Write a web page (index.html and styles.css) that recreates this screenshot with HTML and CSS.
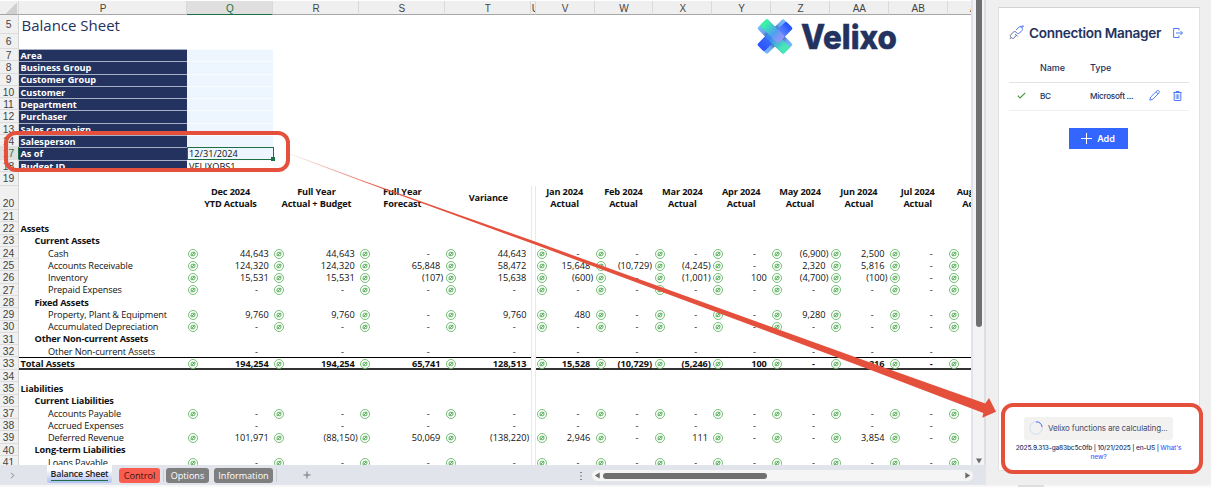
FILE: index.html
```html
<!DOCTYPE html>
<html lang="en">
<head>
    <meta charset="utf-8">
    <title>Balance Sheet</title>
    <link rel="stylesheet" href="styles.css">
</head>
<body>
    <svg class="defs" width="0" height="0">
        <symbol id="velixoCell" viewBox="0 0 10 10">
            <circle cx="5" cy="5" r="4.5" fill="#fff" stroke="#55b055" stroke-width="0.8" />
            <path d="M3.1 6.6 V4.8 Q3.1 3.3 4.6 3.3 H6.9 V5.2 Q6.9 6.7 5.4 6.7 H3.1" fill="none" stroke="#279a2b" stroke-width="0.8" />
            <path d="M4.3 5.7 L5.7 4.3" stroke="#178a1c" stroke-width="1" />
        </symbol>
    </svg>

    <div class="app">
        <div class="workbook">
            <div class="sheetArea">
                <div class="sheet" id="sheet"></div>
                <div class="vScroll"><div class="vThumb"></div><svg class="vArrow" viewBox="0 0 8 8"><path d="M1 1.5 H7 L4 6.5 Z" fill="#6b6b6b" /></svg></div>
                <svg class="logo" viewBox="0 0 142 38">
                    <defs>
                        <linearGradient id="topLeft"><stop offset="0.1" stop-color="#35f5a2" /><stop offset="0.6" stop-color="#4fa0f0" /><stop offset="1" stop-color="#9a92fa" /></linearGradient>
                        <linearGradient id="topRight" x1="0" y1="0" x2="0" y2="1"><stop offset="0" stop-color="#1f50ff" /><stop offset="0.5" stop-color="#5a80fb" /><stop offset="1" stop-color="#9a92fa" /></linearGradient>
                        <linearGradient id="bottomLeft" x1="0" y1="0" x2="0" y2="1"><stop offset="0" stop-color="#3b86ee" /><stop offset="1" stop-color="#2e50ff" /></linearGradient>
                        <linearGradient id="bottomRight"><stop offset="0.2" stop-color="#3b86ee" /><stop offset="0.8" stop-color="#48e8b6" /></linearGradient>
                        <linearGradient id="foldH"><stop offset="0" stop-color="#7abaff" /><stop offset="0.2" stop-color="#6aa8f0" /><stop offset="0.35" stop-color="#3c68b4" /><stop offset="0.65" stop-color="#3c68b4" /><stop offset="0.8" stop-color="#6aa8f0" /><stop offset="1" stop-color="#7abaff" /></linearGradient>
                        <linearGradient id="foldV" x1="0" y1="0" x2="0" y2="1"><stop offset="0" stop-color="#7abaff" /><stop offset="0.2" stop-color="#6aa8f0" /><stop offset="0.35" stop-color="#3c68b4" /><stop offset="0.65" stop-color="#3c68b4" /><stop offset="0.8" stop-color="#6aa8f0" /><stop offset="1" stop-color="#7abaff" /></linearGradient>
                    </defs>
                    <g transform="translate(19 18.5) rotate(45)">
                        <rect x="-18.5" y="-7" width="37" height="14" rx="2" fill="url(#foldH)" />
                        <rect x="-7" y="-18.5" width="14" height="37" rx="2" fill="url(#foldV)" />
                        <rect x="-7" y="-3" width="10" height="21.5" rx="2" fill="url(#bottomLeft)" />
                        <rect x="-7" y="-3" width="25.5" height="10" rx="2" fill="url(#bottomRight)" />
                        <rect x="-3" y="-18.5" width="10" height="21.5" rx="2" fill="url(#topRight)" />
                        <rect x="-18.5" y="-7" width="25.5" height="10" rx="2" fill="url(#topLeft)" />
                    </g>
                    <text x="45" y="31.2" class="logoText" textLength="96" lengthAdjust="spacingAndGlyphs">Velixo</text>
                </svg>
            </div>
            <div class="tabBar">
                <svg class="tabNav" viewBox="0 0 8 8"><path d="M2.5 1 L5.5 4 L2.5 7" fill="none" stroke="#777" /></svg>
                <div class="tab active"><span>Balance Sheet</span></div>
                <div class="tab red">Control</div>
                <div class="tabSep"></div>
                <div class="tab gray options">Options</div>
                <div class="tab gray info">Information</div>
                <div class="tabSep"></div>
                <svg class="addTab" viewBox="0 0 8 8"><path d="M4 0.5 V7.5 M0.5 4 H7.5" stroke="#666" stroke-width="0.9" /></svg>
                <svg class="dots" viewBox="0 0 4 10"><path d="M1.4 1.5 h1.2 M1.4 5 h1.2 M1.4 8.5 h1.2" stroke="#444" stroke-width="1.2" /></svg>
                <div class="hScroll">
                    <svg viewBox="0 0 8 8"><path d="M6.5 0.5 V7.5 L1 4 Z" fill="#6b6b6b" /></svg>
                    <div class="hThumb"></div>
                    <svg class="hRight" viewBox="0 0 8 8"><path d="M1.5 0.5 V7.5 L7 4 Z" fill="#6b6b6b" /></svg>
                </div>
            </div>
        </div>

        <div class="pane">
            <div class="card">
                <div class="cardTitle">
                    <svg class="linkIcon" viewBox="0 0 16 16" fill="none">
                        <path d="M6.6 9.6 L9.2 12.2 M8.2 10.6 L5.6 13.6 C4.8 14.5 3.6 14.6 2.8 13.8 L2 13 C1.2 12.2 1.2 11 2 10.2 L4.8 7.6 C5.6 6.8 6.8 6.8 7.6 7.6 L8.2 8.2" stroke="#5a6488" />
                        <path d="M7.6 5.4 L10.4 2.4 C11.2 1.6 12.4 1.6 13.2 2.4 L13.8 3 C14.6 3.8 14.6 5 13.8 5.8 L11.2 8.6 C10.4 9.4 9.2 9.4 8.4 8.6 L7.6 7.8" stroke="#3d6df5" />
                        <path d="M12 1.8 L15.4 0.8 M13.8 3 L15.6 1" stroke="#3d6df5" />
                        <path d="M0.8 15 L2.4 13.4" stroke="#5a6488" />
                    </svg>
                    <h1>Connection Manager</h1>
                    <svg class="exitIcon" viewBox="0 0 10 10" fill="none" stroke="#3d6df5" stroke-width="0.9"><path d="M6 2.5 V0.5 H0.6 V9.5 H6 V7.5 M3 5 H9.3 M7.5 3 L9.5 5 L7.5 7" /></svg>
                </div>
                <div class="connRow head">
                    <span></span><span>Name</span><span>Type</span><span></span><span></span>
                </div>
                <div class="connRow">
                    <svg class="check" viewBox="0 0 9 7"><path d="M0.8 3.6 L3.1 6 L8.3 0.8" fill="none" stroke="#3f9a3c" stroke-width="1.1" /></svg>
                    <span>BC</span>
                    <span>Microsoft ...</span>
                    <svg class="pencil" viewBox="0 0 11 11" fill="none" stroke="#3d6df5" stroke-width="0.9"><path d="M0.8 10.2 L1.7 7 L7.9 0.9 C8.5 0.3 9.3 0.3 9.8 0.9 C10.5 1.5 10.5 2.4 9.9 3 L3.9 9.2 Z M7 1.9 L9 3.9" /></svg>
                    <svg class="trash" viewBox="0 0 9 10" fill="none" stroke="#3d6df5" stroke-width="0.9"><path d="M0.3 1.5 H8.7 M3 1.4 V0.5 H6 V1.4 M1.2 1.6 V9.5 H7.8 V1.6" /><path d="M3.2 3.2 V8 M4.5 3.2 V8 M5.8 3.2 V8" stroke-width="0.7" /></svg>
                </div>
                <button class="addButton"><svg viewBox="0 0 11 11"><path d="M5.5 0 V11 M0 5.5 H11" stroke="#fff" stroke-width="1" /></svg>Add</button>
                <div class="status">
                    <div class="calculating">
                        <svg viewBox="0 0 14 14" fill="none"><circle cx="7" cy="7" r="6.2" stroke="#cfdafb" /><path d="M7 0.8 A6.2 6.2 0 0 1 13.1 6" stroke="#4a74f5" /></svg>
                        <span>Velixo functions are calculating...</span>
                    </div>
                    <p class="version">2025.9.313-ga83bc5c0fb | 10/21/2025 | en-US | <a>What's<br>new?</a></p>
                </div>
            </div>
        </div>
        <div class="bottomEdge"><div class="edgeMark"></div></div>
    </div>

    <div class="callout cellCallout"></div>
    <div class="callout statusCallout"></div>
    <svg class="arrow" viewBox="0 0 1211 487">
        <defs>
            <linearGradient id="fade" gradientUnits="userSpaceOnUse" x1="288" y1="0" x2="385" y2="0"><stop offset="0" stop-color="#e5503c" stop-opacity="0.1" /><stop offset="1" stop-color="#e5503c" /></linearGradient>
        </defs>
        <path d="M290 153.6 L360 179.5 L420 201 L535 241.6 L780 329.9 L891 370 L985.3 403.6 L989 398 L996 411.7 L982.3 417.8 L983.3 412.9 L872 370.4 L780 336 L535 244.6 L420 202.5 L360 180.5 L290 154.3 Z" fill="url(#fade)" />
    </svg>

    <script>
        var columns = ['P', 'Q', 'R', 'S', 'T', 'U', 'V', 'W', 'X', 'Y', 'Z', 'AA', 'AB', 'AC'];
        var dashes = '- - - - - - - - - - -';

        // [row number, kind, label, values for Q-T and V-AB]
        var rows = [
            [5, 'title', 'Balance Sheet'],
            [6, 'blank tall'],
            [7, 'filter', 'Area'],
            [8, 'filter', 'Business Group'],
            [9, 'filter', 'Customer Group'],
            [10, 'filter', 'Customer'],
            [11, 'filter', 'Department'],
            [12, 'filter', 'Purchaser'],
            [13, 'filter', 'Sales campaign'],
            [14, 'filter', 'Salesperson'],
            [17, 'filter selected', 'As of', '12/31/2024'],
            [18, 'filter plain', 'Budget ID', 'VELIXOBS1'],
            [19, 'blank gap'],
            [20, 'header'],
            [21, 'blank'],
            [22, 'group', 'Assets'],
            [23, 'group sub', 'Current Assets'],
            [24, 'item', 'Cash', '44,643 44,643 - 44,643 - - - - (6,900) 2,500 -'],
            [25, 'item', 'Accounts Receivable', '124,320 124,320 65,848 58,472 15,648 (10,729) (4,245) - 2,320 5,816 -'],
            [26, 'item', 'Inventory', '15,531 15,531 (107) 15,638 (600) - (1,001) 100 (4,700) (100) -'],
            [27, 'item', 'Prepaid Expenses', dashes],
            [28, 'group sub', 'Fixed Assets'],
            [29, 'item', 'Property, Plant & Equipment', '9,760 9,760 - 9,760 480 - - - 9,280 - -'],
            [30, 'item', 'Accumulated Depreciation', dashes],
            [31, 'group sub', 'Other Non-current Assets'],
            [32, 'item noIcon', 'Other Non-current Assets', dashes],
            [33, 'total', 'Total Assets', '194,254 194,254 65,741 128,513 15,528 (10,729) (5,246) 100 - 8,216 -'],
            [34, 'blank'],
            [35, 'group', 'Liabilities'],
            [36, 'group sub', 'Current Liabilities'],
            [37, 'item', 'Accounts Payable', dashes],
            [38, 'item noIcon', 'Accrued Expenses', dashes],
            [39, 'item', 'Deferred Revenue', '101,971 (88,150) 50,069 (138,220) 2,946 - 111 - - 3,854 -'],
            [40, 'group sub', 'Long-term Liabilities'],
            [41, 'item', 'Loans Payable', dashes]
        ];
        var headers = ['Dec 2024<br>YTD Actuals', 'Full Year<br>Actual + Budget', 'Full Year<br>Forecast', 'Variance', null,
            'Jan 2024<br>Actual', 'Feb 2024<br>Actual', 'Mar 2024<br>Actual', 'Apr 2024<br>Actual',
            'May 2024<br>Actual', 'Jun 2024<br>Actual', 'Jul 2024<br>Actual', 'Aug 2024<br>Actual'];
        var icon = '<svg class="cellIcon"><use href="#velixoCell"/></svg>';

        function valueCell(value, showIcon) {
            var kind = value === '-' ? 'dash' : (value && value[0] === '(' ? 'negative' : 'number');
            return '<div class="cell value">' + (showIcon ? icon : '') + '<span class="' + kind + '">' + (value || '') + '</span></div>';
        }

        function buildRow(row) {
            var kind = row[1];
            var label = (row[2] || '').replace('&', '&amp;');
            var html = '<div class="row ' + kind + '"><div class="rowHead">' + row[0] + '</div><div class="cell label"><span>' + label + '</span></div>';
            if (kind.indexOf('filter') === 0) {
                html += '<div class="cell input">' + (row[3] || '') + '</div>';
            } else if (kind === 'header') {
                headers.forEach(function(h) {
                    html += h ? '<div class="cell heading">' + h + '</div>' : '<div class="cell spacer"></div>';
                });
            } else if (row[3]) {
                var values = row[3].split(' ');
                var showIcon = kind.indexOf('noIcon') < 0;
                values.splice(4, 0, null);
                values.push('');
                values.forEach(function(v) {
                    html += v === null ? '<div class="cell spacer"></div>' : valueCell(v, showIcon);
                });
            } else if (row[0] > 20) {
                html += '<div class="cell spacer only"></div>';
            }
            return html + '</div>';
        }

        var head = '<div class="row colHeads"><div class="corner"></div>' + columns.map(function(c) {
            return '<div class="colHead' + (c === 'Q' ? ' current' : '') + '"><span>' + c + '</span></div>';
        }).join('') + '</div>';
        document.getElementById('sheet').innerHTML = head + rows.map(buildRow).join('');
    </script>
</body>
</html>
```
FILE: styles.css
```css
* {
    box-sizing: border-box;
}

body {
    margin: 0;
    width: 1211px;
    height: 487px;
    overflow: hidden;
    position: relative;
    background: #fff;
    font-family: "Open Sans", "Noto Sans", sans-serif;
    font-size: 9.2px;
    color: #111;
}

svg {
    display: block;
    flex: none;
}

.defs {
    position: absolute;
}

.app {
    display: grid;
    grid-template-columns: 986px 1fr;
    grid-template-rows: 485px 2px;
    height: 487px;
}

.workbook {
    display: flex;
    flex-direction: column;
    background: #e2e4eb;
}

/* worksheet */
.sheetArea {
    display: flex;
    height: 465px;
    position: relative;
    background: #e2e4eb;
}

.sheet {
    width: 971px;
    height: 465px;
    overflow: hidden;
    background: #fff;
}

.row {
    display: grid;
    grid-template-columns: 19px 168px 86px 86px 85.7px 86px 5px repeat(8, 58.85px);
    grid-template-rows: 100%;
    height: 12.27px;
}

.rowHead {
    background: #f0f0f0;
    border-bottom: 1px solid #dcdcdc;
    border-right: 1px solid #d4d4d4;
    color: #444;
    font-family: "Liberation Sans", sans-serif;
    font-size: 10.3px;
    line-height: 11px;
    display: flex;
    align-items: center;
    justify-content: center;
    padding: 1.4px 1px 0 0;
}

.colHeads {
    height: 15px;
    padding-top: 1px;
}

.colHead, .corner {
    background: #efefef;
    border-bottom: 1px solid #a6a6a6;
    border-right: 1px solid #d9d9d9;
    color: #444;
    font-family: "Liberation Sans", sans-serif;
    font-size: 10px;
    line-height: 15px;
    text-align: center;
    overflow: hidden;
    padding-left: 1px;
}

.corner {
    background: linear-gradient(135deg, #efefef 62%, #cfcfcf 62%);
    background-size: 17px 13px;
}

.colHead.current {
    background: #dfdfdf;
    border-bottom: 1px solid #1d7044;
    color: #1d7044;
}

.cell {
    display: flex;
    align-items: center;
    white-space: nowrap;
    min-width: 0;
    line-height: 12px;
    padding-top: 1px;
}

.label {
    padding-left: 1.5px;
}

.title {
    height: 19px;
}

.title .label {
    font-size: 15px;
    color: #24325f;
    padding-left: 2.5px;
    padding-top: 0;
}

.tall {
    height: 14.9px;
}

.gap {
    height: 13.5px;
}

.filter {
    height: 12.32px;
}

.filter .label {
    background: #24325f;
    border-top: 1px solid #a9b0c4;
    color: #fff;
    font-weight: 700;
    padding-top: 0.4px;
}

.filter .input {
    background: #edf5fe;
    border-top: 1px solid #fafdff;
    padding-top: 0.4px;
    padding-left: 2px;
}

.filter.plain .input {
    background: #fff;
}

.selected .rowHead {
    background: #dfdfdf;
    color: #1d7044;
    border-right-color: #1d7044;
}

.filter.selected .input {
    border: 1px solid #1d7044;
    position: relative;
    padding-left: 1px;
    padding-top: 1px;
    margin-right: -1px;
}

.filter.selected .input::after {
    content: "";
    position: absolute;
    right: -2px;
    bottom: -2px;
    width: 4px;
    height: 4px;
    background: #1d7044;
}

.header {
    height: 24.6px;
}

.header .rowHead {
    align-items: flex-end;
}

.heading {
    justify-content: center;
    text-align: center;
    font-weight: 700;
    line-height: 12.3px;
    letter-spacing: -0.15px;
    padding-left: 1px;
    padding-top: 1px;
}

/* monthly columns */
.heading:nth-child(n+8) {
    padding-left: 0;
    padding-right: 1px;
}

.group .label {
    font-weight: 700;
    letter-spacing: -0.18px;
}

.sub .label {
    padding-left: 15.5px;
}

.item .label {
    padding-left: 29px;
    letter-spacing: -0.12px;
}

.value {
    justify-content: space-between;
    padding-left: 1.2px;
}

.cellIcon {
    width: 10px;
    height: 10px;
}

.value span {
    margin-left: auto;
}

.number {
    padding-right: 4.3px;
}

.negative {
    padding-right: 1.4px;
}

.dash {
    padding-right: 15px;
}

.spacer {
    border-left: 1px solid #dfeafa;
    border-right: 1px solid #dfeafa;
}

.spacer.only {
    grid-column: 7;
}

.total {
    height: 12.8px;
}

.total .cell {
    font-weight: 700;
    border-top: 1px solid #000;
    border-bottom: 2px solid #333;
    letter-spacing: -0.08px;
    padding-top: 2px;
}

.total .cell.spacer {
    border-top: none;
    border-bottom: none;
}

.vScroll {
    width: 13px;
    margin-left: 2px;
    background: #f3f3f3;
    border-right: 2px solid #dcdee6;
    display: flex;
    flex-direction: column;
    align-items: center;
    justify-content: space-between;
}

.vThumb {
    width: 6px;
    height: 327px;
    background: #6f6f6f;
    border-radius: 0 0 3px 3px;
}

.vArrow {
    width: 8px;
    height: 8px;
}

/* picture floating on the worksheet */
.logo {
    position: absolute;
    left: 756px;
    top: 18px;
    width: 142px;
    height: 38px;
}

.logoText {
    font-family: "Inter", sans-serif;
    font-weight: 800;
    font-size: 33.5px;
    fill: #24325f;
    stroke: #24325f;
    stroke-width: 0.5px;
}

/* sheet tabs */
.tabBar {
    display: flex;
    align-items: flex-start;
    height: 20px;
}

.tabNav {
    width: 7px;
    height: 7px;
    margin: 7px 31px 0 9px;
}

.tab {
    height: 15px;
    margin-top: 3px;
    border-radius: 3px;
    font-size: 9.1px;
    line-height: 15px;
    text-align: center;
    white-space: nowrap;
}

.tab.active {
    width: 65px;
    height: 17.5px;
    margin: 0 7px 0 0;
    background: linear-gradient(#fff 25%, #aebff2);
    border-radius: 0 0 3px 3px;
    font-weight: 600;
    font-size: 8.8px;
    letter-spacing: -0.15px;
    color: #222;
}

.tab.active span {
    display: inline-block;
    height: 16px;
    line-height: 18px;
    border-bottom: 1px solid #1d7044;
}

.tab.red {
    width: 41px;
    background: #f95d50;
    color: #3d100c;
}

.tab.gray {
    background: #7f7f7f;
    color: #fff;
}

.tab.options {
    width: 43px;
}

.tab.info {
    width: 59px;
    margin-left: 5px;
}

.tabSep {
    width: 1px;
    height: 13px;
    margin: 4px 2px 0 3px;
    background: #cbcdd4;
}

.addTab {
    width: 8px;
    height: 8px;
    margin: 6px 0 0 24px;
}

.dots {
    width: 4px;
    height: 10px;
    margin: 6px 0 0 268px;
}

.hScroll {
    display: flex;
    align-items: center;
    width: 381px;
    height: 11px;
    margin: 5px 0 0 9px;
    padding: 0 2px;
    background: #f5f5f5;
    border-radius: 6px;
}

.hScroll svg {
    width: 7px;
    height: 7px;
}

.hScroll .hRight {
    margin-left: auto;
}

.hThumb {
    width: 164px;
    height: 6px;
    margin-left: 2px;
    border-radius: 3px;
    background: #6f6f6f;
}

/* task pane */
.pane {
    background: #efefef;
    padding: 7px 0 0 12px;
}

.card {
    display: flex;
    flex-direction: column;
    width: 202px;
    height: 464px;
    background: #fff;
    border: 1px solid #e2e2e2;
    border-top-color: #d2d2d2;
    padding: 0 10px;
    font-family: "Inter", sans-serif;
    color: #24325f;
}

.cardTitle {
    display: flex;
    align-items: center;
    height: 48px;
    padding-top: 1px;
}

.linkIcon {
    width: 15px;
    height: 15px;
}

.cardTitle h1 {
    margin: 0 0 0 5px;
    width: 144px;
    font-size: 13.6px;
    font-weight: 600;
    letter-spacing: -0.31px;
    white-space: nowrap;
}

.exitIcon {
    width: 10px;
    height: 10px;
}

.connRow {
    display: grid;
    grid-template-columns: 31px 50px 56px 24px 1fr;
    align-items: center;
    height: 28px;
    padding-bottom: 2px;
    font-size: 8.2px;
    font-weight: 500;
    letter-spacing: -0.28px;
    border-bottom: 1px solid #f0f0f0;
    white-space: nowrap;
}

.connRow.head {
    height: 27px;
    padding-bottom: 3px;
    font-size: 9px;
    letter-spacing: -0.05px;
    border-bottom-color: #e3e3e3;
}

.check {
    width: 9px;
    height: 7px;
    margin-left: 8px;
}

.pencil {
    width: 11px;
    height: 11px;
    margin-left: 3px;
}

.trash {
    width: 9px;
    height: 10px;
    margin-left: 3px;
}

.addButton {
    display: flex;
    align-items: center;
    justify-content: center;
    align-self: center;
    gap: 5px;
    width: 59px;
    height: 20.5px;
    margin: 17px 2px 0 0;
    padding: 0;
    border: none;
    background: #3366ff;
    color: #fff;
    font: 600 9px "Inter", sans-serif;
}

.addButton svg {
    width: 11px;
    height: 11px;
}

.status {
    display: flex;
    flex-direction: column;
    align-items: center;
    margin-top: auto;
    padding: 0 1px 8.5px 0;
}

.calculating {
    display: flex;
    align-items: center;
    gap: 5px;
    width: 149px;
    height: 23px;
    padding-left: 5px;
    background: #f3f2f1;
    border-radius: 3px;
    font-size: 8px;
    letter-spacing: -0.15px;
    color: #444c6c;
    white-space: nowrap;
}

.calculating svg {
    width: 14px;
    height: 14px;
}

.version {
    margin: 4px 0 0;
    font-size: 6.5px;
    font-weight: 500;
    letter-spacing: -0.14px;
    line-height: 9px;
    text-align: center;
    white-space: nowrap;
}

.version a {
    color: #3366ff;
}

.bottomEdge {
    grid-column: 1 / 3;
    background: #f7f7f7;
}

.edgeMark {
    width: 26px;
    height: 2px;
    margin-left: 1018px;
    background: #dedede;
}

/* annotations */
.callout {
    position: absolute;
    border: 4px solid #e5503c;
    border-radius: 12px;
}

.cellCallout {
    left: 4px;
    top: 131px;
    width: 286px;
    height: 41px;
}

.statusCallout {
    left: 1001px;
    top: 403px;
    width: 202px;
    height: 71px;
}

.arrow {
    position: absolute;
    left: 0;
    top: 0;
    width: 1211px;
    height: 487px;
}
```
